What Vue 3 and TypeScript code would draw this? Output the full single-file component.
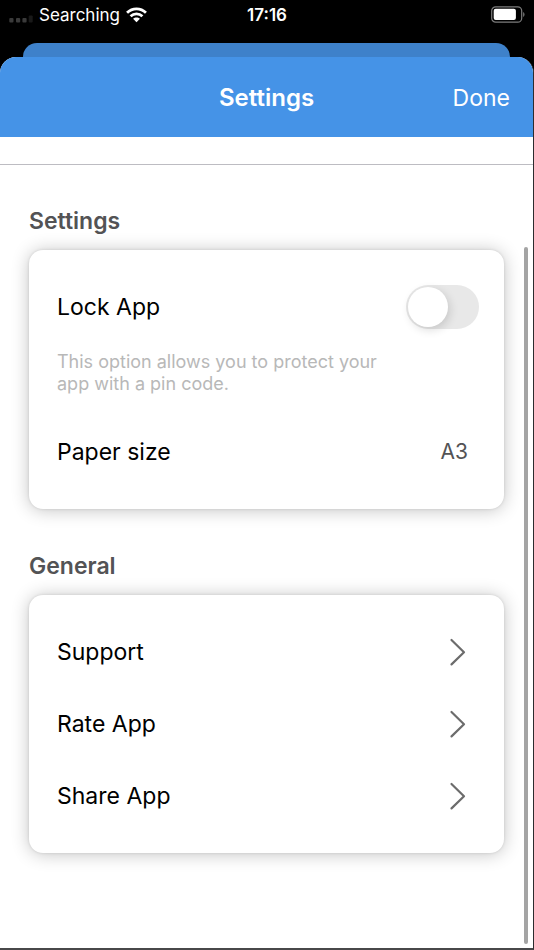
<script setup lang="ts">
import { ref } from 'vue'

const lockApp = ref(false)
const paperSize = ref('A3')
const paperSizes: string[] = ['A3', 'A4', 'A5']
const generalLinks: string[] = ['Support', 'Rate App', 'Share App']
</script>

<template>
  <div class="screen">
    <div class="status">
      <div class="carrier">
        <svg class="signal" width="24" height="8" viewBox="0 0 24 8" aria-hidden="true">
          <rect x="0.3" y="3" width="4.2" height="4.6" rx="1" fill="#3a3a3a" />
          <rect x="7" y="3" width="4.2" height="4.6" rx="1" fill="#3a3a3a" />
          <rect x="13.4" y="3" width="4.2" height="4.6" rx="1" fill="#3a3a3a" />
          <rect x="19.7" y="0.4" width="4" height="7.2" rx="1" fill="#191919" />
        </svg>
        <span>Searching</span>
        <svg class="wifi" width="21" height="16" viewBox="0 0 22 16" aria-hidden="true">
          <g fill="none" stroke="#fff" stroke-width="2.9">
            <path d="M1.1 5.6 C6.6 0.1 15.4 0.1 20.9 5.6" />
            <path d="M4.8 9.3 C8.3 5.9 13.7 5.9 17.2 9.3" />
          </g>
          <path d="M7.4 12 C9.4 10.1 12.6 10.1 14.6 12 L11 15.6 Z" fill="#fff" />
        </svg>
      </div>
      <time class="clock">17:16</time>
      <svg class="battery" width="34" height="18" viewBox="0 0 34 18" aria-hidden="true">
        <rect x="0.7" y="0.8" width="30" height="15.4" rx="4" fill="none" stroke="#7c7c7c" stroke-width="1.2" />
        <rect x="2.7" y="2.8" width="22.2" height="11.2" rx="2" fill="#fff" />
        <path d="M32.2 6 C33.9 6.8 33.9 10.2 32.2 11 Z" fill="#7c7c7c" />
      </svg>
    </div>
    <div class="behind"></div>
    <div class="sheet">
      <header class="bar">
        <h1>Settings</h1>
        <button type="button" class="done">Done</button>
      </header>
      <div class="strip"></div>
      <main class="content">
        <section>
          <h2>Settings</h2>
          <div class="card">
            <div class="row">
              <label for="lock">Lock App</label>
              <input id="lock" v-model="lockApp" class="toggle" type="checkbox" role="switch" aria-describedby="lock-hint" />
            </div>
            <p id="lock-hint" class="hint">This option allows you to protect your app with a pin code.</p>
            <div class="row">
              <label for="paper">Paper size</label>
              <select id="paper" v-model="paperSize" class="value">
                <option v-for="size in paperSizes" :key="size">{{ size }}</option>
              </select>
            </div>
          </div>
        </section>
        <section>
          <h2>General</h2>
          <nav class="card">
            <a v-for="name in generalLinks" :key="name" class="row" href="#">
              <span>{{ name }}</span>
              <svg class="chevron" width="18" height="28" viewBox="0 0 18 28" aria-hidden="true">
                <path d="M2.5 2 L15 14.2 L2.5 26.4" fill="none" stroke="#6c6c6c" stroke-width="2.2" stroke-linecap="round" stroke-linejoin="round" />
              </svg>
            </a>
          </nav>
        </section>
      </main>
      <div class="scrollbar"></div>
    </div>
  </div>
</template>

<style>
body {
  margin: 0;
  background: #000;
}
</style>

<style scoped>
.screen {
  box-sizing: border-box;
  min-height: 100vh;
  display: flex;
  flex-direction: column;
  background: #000;
  font-family: Inter, "Liberation Sans", sans-serif;
}

.status {
  box-sizing: border-box;
  height: 43px;
  padding: 3px 9px 16px;
  display: grid;
  grid-template-columns: 1fr auto 1fr;
  align-items: center;
  color: #fff;
  font-size: 17px;
  line-height: 24px;
}

.carrier {
  display: flex;
  align-items: center;
  gap: 6px;
}

.signal {
  margin-top: 8px;
}

.clock {
  font-weight: 600;
}

.battery {
  justify-self: end;
}

.behind {
  height: 14px;
  margin: 0 24px 0 23px;
  border-radius: 14px 14px 0 0;
  background: #3e81ca;
}

.sheet {
  position: relative;
  flex: 1;
  display: flex;
  flex-direction: column;
  border-right: 1px solid #2c2c2e;
  border-bottom: 2px solid #48484a;
  border-radius: 16px 16px 0 0;
  background: #fff;
  overflow: hidden;
}

.bar {
  box-sizing: border-box;
  height: 80px;
  padding: 2px 23px 0;
  display: grid;
  grid-template-columns: 1fr auto 1fr;
  align-items: center;
  background: #4593e7;
  color: #fff;
}

h1 {
  grid-column: 2;
  margin: 0;
  font-size: 24px;
  font-weight: 600;
  line-height: 28px;
}

.done {
  justify-self: end;
  padding: 0;
  border: 0;
  background: none;
  color: inherit;
  font: inherit;
  font-size: 23px;
  line-height: 28px;
}

.strip {
  height: 27px;
  border-bottom: 1px solid #bdbcc2;
}

.content {
  padding: 42px 29px 48px;
  display: flex;
  flex-direction: column;
  gap: 43px;
}

h2 {
  margin: 0 0 15px;
  color: #535355;
  font-size: 23px;
  font-weight: 600;
  line-height: 28px;
}

.card {
  padding: 21px 25px 21px 28px;
  border-radius: 14px;
  background: #fff;
  box-shadow: 0 0 3px rgba(0, 0, 0, 0.12), 0 1px 18px rgba(0, 0, 0, 0.24);
}

.row {
  height: 72px;
  display: flex;
  align-items: center;
  justify-content: space-between;
  color: #000;
  font-size: 23px;
  line-height: 28px;
  text-decoration: none;
}

.toggle {
  appearance: none;
  box-sizing: border-box;
  width: 73px;
  height: 44px;
  margin: 0;
  padding: 2px;
  border-radius: 22px;
  background: #e8e8e8;
}

.toggle::before {
  content: "";
  display: block;
  width: 40px;
  height: 40px;
  border-radius: 50%;
  background: #fff;
  box-shadow: 2px 3px 10px rgba(0, 0, 0, 0.14);
}

.toggle:checked {
  background: #34c759;
}

.toggle:checked::before {
  margin-left: 29px;
}

.hint {
  max-width: 340px;
  margin: 0;
  padding: 8px 0 21px;
  color: #b8b8b8;
  font-size: 18px;
  line-height: 22px;
}

.value {
  appearance: none;
  width: 80px;
  padding: 0;
  margin-right: 11px;
  border: 0;
  background: none;
  color: #535355;
  font: inherit;
  font-size: 21px;
  line-height: 28px;
  text-align: right;
  text-align-last: right;
}

.chevron {
  margin-right: 12px;
}

.scrollbar {
  position: absolute;
  top: 190px;
  right: 5px;
  bottom: 4px;
  width: 4px;
  border-radius: 2px;
  background: #a4a4a4;
}
</style>
